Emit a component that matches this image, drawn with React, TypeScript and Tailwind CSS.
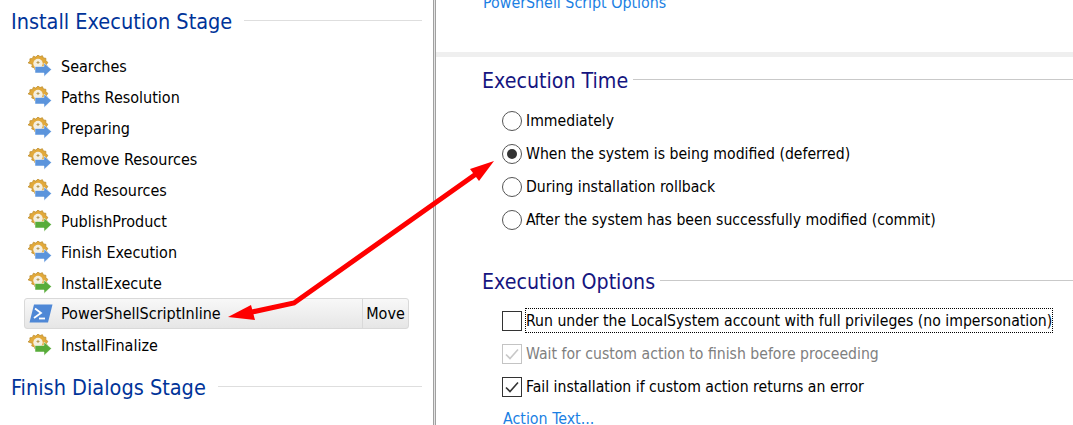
import type { ReactNode } from 'react';

/* Actions list on the left, action options on the right, red arrows on top */

const font = "font-['DejaVu_Sans',sans-serif] [font-stretch:condensed]";

function ActionIcon({ color }: { color: 'blue' | 'green' }) {
  const fill = color === 'blue' ? '#5b94dc' : '#58ac3a';
  return (
    <svg width="24" height="23" viewBox="0 0 24 23" className="shrink-0">
      <path
        d="M10 0l2 1.600 2.400-.9 1 2.300 2.500.3-.1 2.500 2 1.500-1.300 2.200.8 2.400-2.400.8-.9 2.300-2.500-.4-2 1.600-2-1.600-2.500.4-.9-2.300-2.400-.8.8-2.400L0 7.800l2-1.500-.1-2.500L4.400 3.500l1-2.300 2.400.9z"
        fill="#e2a93a"
        stroke="#bf8f30"
        strokeWidth="0.8"
      />
      <circle cx="10" cy="8.500" r="4.700" fill="#f5efdf" />
      <path d="M8.500 7.500h3M10 6v3" stroke="#b89a55" strokeWidth="1" />
      <path d="M7 11.500h9V8l7.500 6.500L16 21.500V18H7z" fill={fill} stroke="#fff" strokeWidth="0.5" />
    </svg>
  );
}

function ScriptIcon() {
  return (
    <svg width="24" height="19" viewBox="0 0 24 19" className="shrink-0">
      <path d="M5 0.500h18.500L19 18.500H0.500z" fill="#4f88d6" />
      <path d="M6 4.500l6 4.500-7 5" fill="none" stroke="#fff" strokeWidth="1.800" />
      <path d="M10 14.500h6" stroke="#fff" strokeWidth="1.800" />
    </svg>
  );
}

function Row({ label, color }: { label: string; color: 'blue' | 'green' }) {
  return (
    <div className="flex h-[31px] items-center pl-[28px]">
      <div className="w-[33px]">
        <ActionIcon color={color} />
      </div>
      <span className="text-[16px] text-black">{label}</span>
    </div>
  );
}

function StageHeading({ title, className }: { title: string; className: string }) {
  return (
    <div className={`flex items-center gap-3 pl-[11px] pr-[11px] ${className}`}>
      <h2 className="text-[21.500px] leading-[21px] text-[#003399]">{title}</h2>
      <div className="h-px flex-1 -translate-y-px bg-[#dedede]" />
    </div>
  );
}

function OptionHeading({ title, className }: { title: string; className: string }) {
  return (
    <div className={`flex items-center gap-[5px] pl-[46px] ${className}`}>
      <h2 className="text-[21.200px] leading-[21px] text-[#151580]">{title}</h2>
      <div className="h-px flex-1 -translate-y-px bg-[#c9c9c9]" />
    </div>
  );
}

function Radio({ label, checked }: { label: string; checked?: boolean }) {
  return (
    <div className="flex h-[33px] items-center gap-[4px] pl-[66px]">
      <span className="flex h-[20px] w-[20px] items-center justify-center rounded-full border border-[#555] bg-white">
        {checked && <span className="h-[10px] w-[10px] rounded-full bg-[#333]" />}
      </span>
      <span className="text-[15.650px] text-black">{label}</span>
    </div>
  );
}

function Check({
  children,
  checked,
  disabled,
  focused,
}: {
  children: ReactNode;
  checked?: boolean;
  disabled?: boolean;
  focused?: boolean;
}) {
  return (
    <div className="flex h-[33px] items-center gap-[4px] pl-[66px]">
      <span
        className={`flex h-[20px] w-[20px] items-center justify-center border ${
          disabled ? 'border-[#c4c4c4]' : 'border-[#333]'
        }`}
      >
        {checked && (
          <svg width="16" height="14" viewBox="0 0 16 14">
            <path
              d="M2 7.500l4 4 8-9"
              fill="none"
              stroke={disabled ? '#c8c8c8' : '#333'}
              strokeWidth="1.600"
            />
          </svg>
        )}
      </span>
      <span
        className={`whitespace-nowrap text-[15.650px] ${disabled ? 'text-[#808080]' : 'text-black'} ${
          focused ? 'outline-1 outline-dotted outline-black' : ''
        }`}
      >
        {children}
      </span>
    </div>
  );
}

function LeftPanel() {
  return (
    <div className="w-[433px] shrink-0 bg-white">
      <StageHeading title="Install Execution Stage" className="pt-[11px]" />
      <div className="pt-[19px]">
        <Row label="Searches" color="blue" />
        <Row label="Paths Resolution" color="blue" />
        <Row label="Preparing" color="blue" />
        <Row label="Remove Resources" color="blue" />
        <Row label="Add Resources" color="blue" />
        <Row label="PublishProduct" color="green" />
        <Row label="Finish Execution" color="blue" />
        <Row label="InstallExecute" color="green" />
        <div className="mx-[24px] -mt-px mb-px flex h-[31px] items-center rounded-[3px] border border-[#d9d9d9] bg-gradient-to-b from-[#f8f8f8] to-[#e6e6e6] pl-[4px]">
          <div className="w-[32px]">
            <ScriptIcon />
          </div>
          <span className="flex-1 pt-px text-[16px] text-black">PowerShellScriptInline</span>
          <span className="flex h-full w-[46px] items-center justify-center border-l border-[#d9d9d9] text-[16px] text-black">
            Move
          </span>
        </div>
        <Row label="InstallFinalize" color="green" />
      </div>
      <StageHeading title="Finish Dialogs Stage" className="pt-[16px]" />
    </div>
  );
}

function RightPanel() {
  return (
    <div className="min-w-0 flex-1 bg-white">
      <div className="h-[52px] overflow-hidden">
        <a className="-mt-[9px] block pl-[47px] text-[15.850px] text-[#1b7fe3]">PowerShell Script Options</a>
      </div>
      <div className="h-[5px] bg-[#efefef]" />
      <OptionHeading title="Execution Time" className="pt-[13px]" />
      <div className="pt-[13px]">
        <Radio label="Immediately" />
        <Radio label="When the system is being modified (deferred)" checked />
        <Radio label="During installation rollback" />
        <Radio label="After the system has been successfully modified (commit)" />
      </div>
      <OptionHeading title="Execution Options" className="pt-[35px]" />
      <div className="pt-[12px]">
        <Check focused>Run under the LocalSystem account with full privileges (no impersonation)</Check>
        <Check checked disabled>
          Wait for custom action to finish before proceeding
        </Check>
        <Check checked>Fail installation if custom action returns an error</Check>
      </div>
      <a className="block pl-[67px] pt-[4px] text-[15.850px] text-[#1b7fe3]">Action Text...</a>
    </div>
  );
}

export default function App() {
  return (
    <div className={`relative flex h-[425px] w-[1073px] overflow-hidden bg-white ${font}`}>
      <LeftPanel />
      <div className="w-[3px] shrink-0 border-x border-[#a0a0a0] bg-[#e4e4e4]" />
      <RightPanel />

      {/* annotation drawn over the screenshot */}
      <svg className="pointer-events-none absolute inset-0" width="1073" height="425" viewBox="0 0 1073 425">
        <path d="M476 174L294 303L252 312" fill="none" stroke="#fe0000" strokeWidth="5" />
        <path d="M494 161L470 169L479 181z" fill="#fe0000" />
        <path d="M228 317L251 305L255 320z" fill="#fe0000" />
      </svg>
    </div>
  );
}
